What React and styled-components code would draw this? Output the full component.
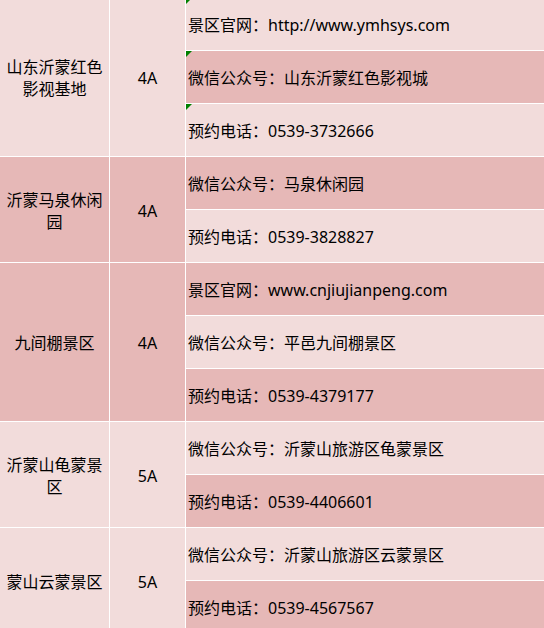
import React from 'react'
import styled, { createGlobalStyle } from 'styled-components'

const spots = [
  {
    name: '山东沂蒙红色影视基地',
    grade: '4A',
    info: ['景区官网：http://www.ymhsys.com', '微信公众号：山东沂蒙红色影视城', '预约电话：0539-3732666'],
    flagged: true,
  },
  {
    name: '沂蒙马泉休闲园',
    grade: '4A',
    info: ['微信公众号：马泉休闲园', '预约电话：0539-3828827'],
  },
  {
    name: '九间棚景区',
    grade: '4A',
    info: ['景区官网：www.cnjiujianpeng.com', '微信公众号：平邑九间棚景区', '预约电话：0539-4379177'],
  },
  {
    name: '沂蒙山龟蒙景区',
    grade: '5A',
    info: ['微信公众号：沂蒙山旅游区龟蒙景区', '预约电话：0539-4406601'],
  },
  {
    name: '蒙山云蒙景区',
    grade: '5A',
    info: ['微信公众号：沂蒙山旅游区云蒙景区', '预约电话：0539-4567567'],
  },
]

function App() {
  let row = 0   // 行番号（色の交互用）

  return (
    <>
      <GlobalStyle />
      <Viewport>
        <Sheet>
          {spots.map((spot) => {
            const start = row + 1
            const span = spot.info.length
            const dark = start % 2 === 0
            row += span
            return (
              <React.Fragment key={spot.name}>
                <NameCell $dark={dark} $row={start} $span={span}>
                  {spot.name}
                </NameCell>
                <GradeCell $dark={dark} $row={start} $span={span}>
                  {spot.grade}
                </GradeCell>
                {spot.info.map((text, i) => (
                  <InfoCell
                    key={text}
                    $dark={(start + i) % 2 === 0}
                    $flag={spot.flagged}
                    $row={start + i}
                  >
                    {text}
                  </InfoCell>
                ))}
              </React.Fragment>
            )
          })}
        </Sheet>
      </Viewport>
    </>
  )
}

// ----------------------------------------------------------------------

const GlobalStyle = createGlobalStyle`
  html, body {
    margin: 0;
    padding: 0;
    background: #fff;
  }
  body {
    font-family: "Noto Sans", "Noto Sans CJK SC", sans-serif;
    color: #000;
  }
`

const Viewport = styled.div`
  width: 544px;
  height: 628px;
  overflow: hidden;
`

const Sheet = styled.div`
  display: grid;
  grid-template-columns: 109px 75px 1fr;
  grid-auto-rows: 52px;
  gap: 1px;
  margin-top: -2px;
  background: #fff;
`

const Cell = styled.div`
  display: flex;
  align-items: center;
  grid-row: ${({ $row, $span = 1 }) => `${$row} / span ${$span}`};
  background: ${({ $dark }) => ($dark ? '#e6b8b7' : '#f2dcdb')};
  font-size: 16px;
  line-height: 22px;
  padding-top: 2px;
  box-sizing: border-box;
`

const NameCell = styled(Cell)`
  grid-column: 1;
  justify-content: center;
  text-align: center;
  padding: 2px 4px 0;
`

const GradeCell = styled(Cell)`
  grid-column: 2;
  justify-content: center;
`

const InfoCell = styled(Cell)`
  grid-column: 3;
  position: relative;
  padding-left: 2px;
  white-space: nowrap;

  ${({ $flag }) => $flag && `
    &::before {
      content: '';
      position: absolute;
      top: 0;
      left: 0;
      border-top: 6px solid #008000;
      border-right: 6px solid transparent;
    }
  `}
`

export default App
